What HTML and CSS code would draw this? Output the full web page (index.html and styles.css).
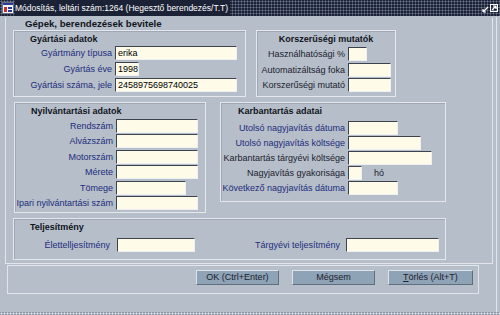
FILE: index.html
```html
<!DOCTYPE html>
<html lang="hu">
<head>
  <meta charset="UTF-8" />
  <title>Módosítás, leltári szám:1264</title>
  <link rel="stylesheet" href="styles.css">
</head>
<body>
  <div class="window">
    <div class="titlebar">
      <svg class="app-icon" width="12" height="12" viewBox="0 0 12 12">
        <rect x="0.5" y="0.5" width="11" height="11" fill="#f4f4f4" stroke="#6a7080"/>
        <rect x="1" y="1" width="10" height="2" fill="#2a3a9a"/>
        <rect x="2" y="5" width="3" height="5" fill="#c03030"/>
        <rect x="6" y="5" width="4" height="2" fill="#2a3a9a"/>
        <rect x="6" y="8" width="4" height="2" fill="#2a3a9a"/>
      </svg>
      <span class="title">Módosítás, leltári szám:1264 (Hegesztő berendezés/T.T)</span>
      <svg class="win-btns" width="16" height="10" viewBox="0 0 16 10">
        <path d="M1 9 L6 4 M1 9 L1 6 M1 9 L4 9" stroke="#ffffff" stroke-width="1.2" fill="none"/>
        <rect x="8.5" y="1.5" width="7" height="7" fill="none" stroke="#ffffff"/>
        <path d="M10 7 L14 3 M14 3 L11 3 M14 3 L14 6" stroke="#ffffff" stroke-width="1.2" fill="none"/>
      </svg>
    </div>

    <div class="client">
      <div class="main-frame">
        <div class="heading">Gépek, berendezések bevitele</div>

        <div class="row">
          <div class="group g-gyartasi">
            <div class="group-title">Gyártási adatok</div>
            <div class="fields">
              <span class="label">Gyártmány típusa</span><span class="input" style="width:122px">erika</span>
              <span class="label">Gyártás éve</span><span class="input" style="width:24px">1998</span>
              <span class="label">Gyártási száma, jele</span><span class="input" style="width:122px">2458975698740025</span>
            </div>
          </div>

          <div class="group g-korszer">
            <div class="group-title centered">Korszerűségi mutatók</div>
            <div class="fields">
              <span class="label dark">Használhatósági %</span><span class="input" style="width:19px"></span>
              <span class="label dark">Automatizáltság foka</span><span class="input" style="width:43px"></span>
              <span class="label dark">Korszerűségi mutató</span><span class="input" style="width:43px"></span>
            </div>
          </div>
        </div>

        <div class="row row-mid">
          <div class="group g-nyilv">
            <div class="group-title">Nyilvántartási adatok</div>
            <div class="fields">
              <span class="label">Rendszám</span><span class="input" style="width:82px"></span>
              <span class="label">Alvázszám</span><span class="input" style="width:82px"></span>
              <span class="label">Motorszám</span><span class="input" style="width:82px"></span>
              <span class="label">Mérete</span><span class="input" style="width:82px"></span>
              <span class="label">Tömege</span><span class="input" style="width:70px"></span>
              <span class="label">Ipari nyilvántartási szám</span><span class="input" style="width:82px"></span>
            </div>
          </div>

          <div class="group g-karb">
            <div class="group-title">Karbantartás adatai</div>
            <div class="fields">
              <span class="label">Utolsó nagyjavítás dátuma</span><span class="input" style="width:50px"></span>
              <span class="label">Utolsó nagyjavítás költsége</span><span class="input" style="width:73px"></span>
              <span class="label dark">Karbantartás tárgyévi költsége</span><span class="input" style="width:84px"></span>
              <span class="label dark">Nagyjavítás gyakorisága</span><span class="with-unit"><span class="input" style="width:14px"></span><span class="unit">hó</span></span>
              <span class="label">Következő nagyjavítás dátuma</span><span class="input" style="width:50px"></span>
            </div>
          </div>
        </div>

        <div class="row row-bottom">
          <div class="group g-telj">
            <div class="group-title">Teljesítmény</div>
            <div class="telj-line">
              <span class="label l-elet">Élettelljesítmény</span><span class="input" style="width:78px"></span>
              <span class="label l-targy">Tárgyévi teljesítmény</span><span class="input" style="width:93px"></span>
            </div>
          </div>
        </div>
      </div>

      <div class="button-frame">
        <button class="btn">OK (Ctrl+Enter)</button>
        <button class="btn">Mégsem</button>
        <button class="btn btn-wide"><u>T</u>örlés (Alt+T)</button>
      </div>
    </div>
    <div class="bottom-edge"></div>
  </div>
</body>
</html>
```

FILE: styles.css
```css
body {
  margin: 0;
  font-family: "Liberation Sans", Arial, sans-serif;
  font-size: 9px;
  color: #1b2230;
}

.window {
  width: 500px;
  height: 315px;
  overflow: hidden;
  background: #b6bec9;
}

.titlebar {
  height: 16px;
  display: flex;
  align-items: center;
  background: radial-gradient(circle, #6d7891 0.9px, transparent 1.1px) 0 0 / 3px 3px, #1b2236;
}

.app-icon {
  margin-left: 2px;
  margin-right: 1px;
}

.title {
  color: #ffffff;
  font-size: 8.5px;
  background: #1b2236;
  padding-right: 2px;
  line-height: 16px;
}

.win-btns {
  margin-left: auto;
  margin-right: 2px;
}

.client {
  height: 295px;
  border-right: 1px solid #e2e6eb;
  width: 497px;
  box-sizing: border-box;
}

.main-frame {
  margin-left: 5px;
  margin-top: 1px;
  width: 488px;
  height: 247px;
  box-sizing: border-box;
  border: 1px solid #e2e6eb;
  border-top-color: #b6bec9;
  padding-left: 7px;
}

.heading {
  font-weight: bold;
  font-size: 9.6px;
  color: #10141c;
  line-height: 12px;
  margin-left: 12px;
}

.row {
  display: flex;
  align-items: flex-start;
  gap: 10px;
}

.row-mid {
  margin-top: 5px;
}

.row-bottom {
  margin-top: 5px;
}

.group {
  box-sizing: border-box;
  border: 1px solid #e4e8ed;
  box-shadow: inset 1px 1px 0 #9ea7b3;
  padding-top: 2px;
}

.group-title {
  font-weight: bold;
  color: #10141c;
  line-height: 12px;
  padding-left: 16px;
}

.group-title.centered {
  padding-left: 0;
  text-align: center;
}

.fields {
  display: grid;
  grid-template-columns: 98px auto;
  column-gap: 3px;
  row-gap: 2px;
  justify-items: start;
}

.label {
  justify-self: end;
  text-align: right;
  line-height: 14px;
  color: #1d2c7c;
  white-space: nowrap;
}

.label.dark {
  color: #1b2230;
}

.input {
  display: block;
  height: 14px;
  box-sizing: border-box;
  background: #fffbe9;
  border-top: 1px solid #3c434c;
  border-left: 1px solid #3c434c;
  border-bottom: 1px solid #eef0f3;
  border-right: 1px solid #eef0f3;
  padding-left: 2px;
  line-height: 12px;
  color: #000000;
  white-space: nowrap;
}

.g-gyartasi {
  width: 233px;
  height: 67px;
}

.g-gyartasi .fields {
  margin-top: 1px;
}

.g-korszer {
  width: 140px;
  height: 67px;
}

.g-korszer .fields {
  grid-template-columns: 88px auto;
  margin-top: 2px;
  row-gap: 1.5px;
}

.g-nyilv {
  width: 192px;
  height: 111px;
  margin-left: 1px;
}

.g-nyilv .fields {
  margin-top: 2px;
  row-gap: 1.4px;
}

.g-karb {
  width: 226px;
  height: 100px;
  margin-left: 4px;
}

.g-karb .group-title {
  padding-left: 17px;
}

.g-karb .fields {
  grid-template-columns: 124px auto;
  margin-top: 4px;
  row-gap: 1px;
}

.with-unit {
  display: flex;
  align-items: center;
}

.unit {
  margin-left: 12px;
  color: #1b2230;
}

.g-telj {
  width: 433px;
  height: 42px;
}

.telj-line {
  display: flex;
  align-items: center;
  margin-top: 5px;
}

.l-elet {
  width: 96px;
  margin-right: 7px;
}

.l-targy {
  width: 145px;
  margin-right: 6px;
}

.button-frame {
  margin-left: 7px;
  margin-top: 1px;
  width: 472px;
  height: 29px;
  box-sizing: border-box;
  border: 1px solid #e2e6eb;
  display: flex;
  justify-content: flex-end;
  align-items: flex-start;
  gap: 13px;
  padding-top: 4px;
  padding-right: 5px;
}

.btn {
  width: 83px;
  height: 15px;
  padding: 0;
  font-family: "Liberation Sans", Arial, sans-serif;
  font-size: 9px;
  color: #1b2230;
  background: #8fa3b6;
  border: 1px solid #dde3ea;
  border-right-color: #5f6d7c;
  border-bottom-color: #5f6d7c;
  line-height: 13px;
}

.btn-wide {
  width: 85px;
}

.bottom-edge {
  height: 4px;
  background: radial-gradient(circle, #e4e8ee 0.9px, transparent 1.1px) 0 0 / 3px 3px, #8d96a3;
}
```
